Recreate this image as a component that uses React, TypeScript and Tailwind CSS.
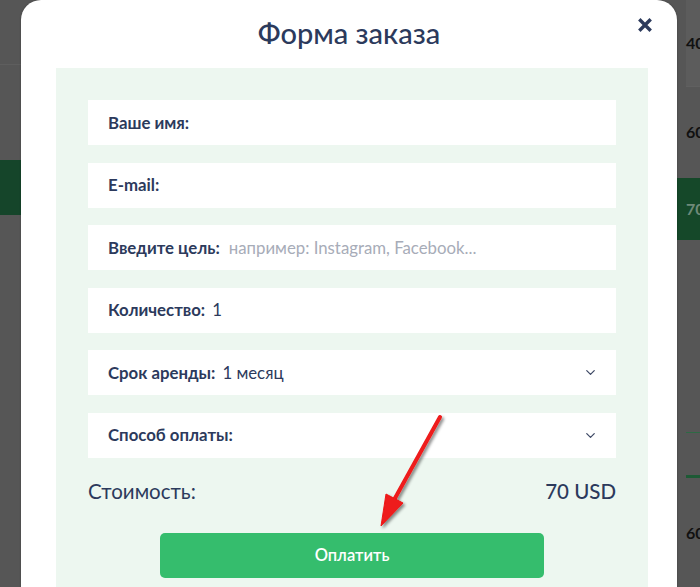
import { ChevronDown } from "lucide-react";

const navy = "text-[#2c3a5c]";

function Field({
  label,
  value,
  placeholder,
  select,
}: {
  label: string;
  value?: string;
  placeholder?: string;
  select?: boolean;
}) {
  return (
    <div className="flex h-[45px] items-center bg-white pl-5 pr-[18px] text-[16.8px]">
      <span className={`font-bold ${navy}`}>{label}</span>
      {value && <span className={`ml-[7px] ${navy}`}>{value}</span>}
      {placeholder && <span className="ml-[9px] text-[#a7acb8]">{placeholder}</span>}
      {select && (
        <ChevronDown className="ml-auto h-[15px] w-[15px] text-[#3f4a66]" strokeWidth={2} />
      )}
    </div>
  );
}

export default function App() {
  return (
    <div className="relative h-[587px] w-[700px] overflow-hidden bg-[#565656] font-['Lato','Noto_Sans',sans-serif]">
      {/* page behind the overlay */}
      <div className="flex h-full">
        <div className="flex w-[21px] flex-col">
          <div className="h-[65px] border-b border-[#5e5e5e]" />
          <div className="h-[95px]" />
          <div className="h-[55px] bg-[#15452a]" />
        </div>
        <div className="flex-1" />
        <div className="flex w-[23px] flex-col pl-[9px] text-[16px] font-bold text-[#111]">
          <div className="flex h-[88px] items-center border-b border-[#606060] bg-[#5c5c5c]">40</div>
          <div className="flex h-[92px] items-center">60</div>
          <div className="flex h-[63px] items-center -ml-[9px] pl-[9px] bg-[#154829] text-[#6f8a79]">70</div>
          <div className="h-[195px] border-b border-[#2e6a45]" />
          <div className="h-[46px] border-b-[3px] border-[#1d5a35]" />
          <div className="flex h-[110px] items-center">60</div>
        </div>
      </div>

      {/* modal */}
      <div className="absolute left-[21px] right-[23px] top-0 h-[620px] rounded-t-[20px] bg-white shadow-[0_0_2px_rgba(0,0,0,0.3)]">
        <div className="relative flex h-[68px] items-center justify-center">
          <h1 className={`pb-[2px] text-[29px] font-medium ${navy}`}>Форма заказа</h1>
          <button className="absolute right-[24px] top-[17px] p-[1px]">
            <svg width="14" height="14" viewBox="0 0 14 14">
              <path d="M2.5 2.5 L11.5 11.5 M11.5 2.5 L2.5 11.5" stroke="#2c3a5c" strokeWidth="3.4" strokeLinecap="square" />
            </svg>
          </button>
        </div>
        <div className="ml-[35px] mr-[29px] bg-[#edf7f0] px-[32px] pt-[32px]">
          <div className="flex flex-col gap-[17.5px]">
            <Field label="Ваше имя:" />
            <Field label="E-mail:" />
            <Field label="Введите цель:" placeholder="например: Instagram, Facebook..." />
            <Field label="Количество:" value="1" />
            <Field label="Срок аренды:" value="1 месяц" select />
            <Field label="Способ оплаты:" select />
          </div>
          <div className={`mt-[18px] flex items-center justify-between text-[20.5px] ${navy}`}>
            <span>Стоимость:</span>
            <span className="font-medium">70 USD</span>
          </div>
          <div className="flex justify-center pt-[27px] pb-[40px]">
            <button className="h-[45px] w-[384px] rounded-[5px] bg-[#35bd6d] text-[16.5px] font-semibold text-white">
              Оплатить
            </button>
          </div>
        </div>
      </div>

      {/* red arrow annotation */}
      <svg className="pointer-events-none absolute left-0 top-0" width="700" height="587">
        <defs>
          <filter id="sh" x="-50%" y="-50%" width="200%" height="200%">
            <feDropShadow dx="2" dy="2" stdDeviation="1.5" floodColor="#000" floodOpacity="0.45" />
          </filter>
        </defs>
        <g filter="url(#sh)" fill="#ee1a1a" stroke="#ee1a1a">
          <line x1="440" y1="417" x2="394" y2="500" strokeWidth="4" strokeLinecap="round" />
          <polygon points="381,526 386,494 403,503" strokeWidth="1" strokeLinejoin="round" />
        </g>
      </svg>
    </div>
  );
}
